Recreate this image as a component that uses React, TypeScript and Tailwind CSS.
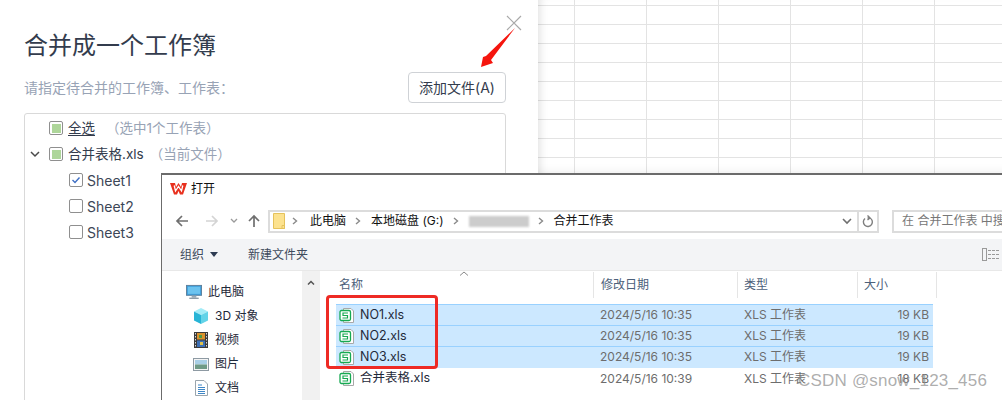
const cjk = "font-['Inter','Noto_Sans_CJK_SC',sans-serif]";

function Cross() {
  return (
    <svg width="16" height="16" viewBox="0 0 16 16" className="absolute left-[506px] top-[15px]">
      <path d="M1 1L15 15M15 1L1 15" stroke="#a9a9a9" strokeWidth="1.2" fill="none" />
    </svg>
  );
}

function RedArrow() {
  return (
    <svg width="46" height="46" viewBox="0 0 46 46" className="absolute left-[478px] top-[26px]">
      <path d="M37 2L13 34L15 37L3 41L5 31L8 30Z" fill="#f5150e" />
    </svg>
  );
}

function Mixed() {
  return (
    <span className="flex h-[14px] w-[14px] items-center justify-center rounded-[2px] border border-[#8f8f8f] bg-white">
      <span className="h-[9px] w-[9px] bg-[#aed69a]" />
    </span>
  );
}

function SheetRow({ name, checked }: { name: string; checked?: boolean }) {
  return (
    <div className="flex h-[26px] items-center gap-[4px] pl-[44px]">
      <span className="flex h-[14px] w-[14px] items-center justify-center rounded-[2px] border border-[#8f8f8f] bg-white">
        {checked && (
          <svg width="10" height="10" viewBox="0 0 10 10">
            <path d="M1.500 5L4 7.500L8.500 2.500" stroke="#3f6fc4" strokeWidth="1.400" fill="none" />
          </svg>
        )}
      </span>
      <span className="text-[14px] text-[#3c4656]">{name}</span>
    </div>
  );
}

function WpsLogo() {
  return (
    <svg width="17" height="12" viewBox="0 0 17 12">
      <path d="M0 0H5L6 4L8.500 0L11 4L12 0H17L13 11.500H10L8.500 8L7 11.500H4Z" fill="#e8301e" />
      <path d="M4.200 2.500L5.500 8L8.500 3.500L11.500 8L12.800 2.500" stroke="#fff" strokeWidth="1.300" fill="none" />
    </svg>
  );
}

function Chevron() {
  return (
    <svg width="6" height="8" viewBox="0 0 6 8">
      <path d="M1 1L4.500 4L1 7" stroke="#8a8a8a" strokeWidth="1.400" fill="none" />
    </svg>
  );
}

function ArrowIcon({ dir, color }: { dir: "left" | "right" | "up"; color: string }) {
  const d =
    dir === "left"
      ? "M13 7H2M7 2L2 7L7 12"
      : dir === "right"
        ? "M1 7H12M7 2L12 7L7 12"
        : "M7 13V2M2 7L7 2L12 7";
  return (
    <svg width="14" height="14" viewBox="0 0 14 14">
      <path d={d} stroke={color} strokeWidth="1.700" fill="none" />
    </svg>
  );
}

function XlsIcon() {
  return (
    <svg width="16" height="17" viewBox="0 0 16 17">
      <path d="M4.500 1.500H12L14.500 4V15.500H4.500Z" fill="#fff" stroke="#a8a8a8" />
      <rect x="1" y="3.500" width="10.500" height="10" rx="1.500" fill="#fff" stroke="#16a951" strokeWidth="1.300" />
      <path d="M9 6H4V8.500H8.500V11H3.500" stroke="#16a951" strokeWidth="1.200" fill="none" />
    </svg>
  );
}

function PcIcon() {
  return (
    <svg width="17" height="16" viewBox="0 0 17 16">
      <rect x="0.500" y="1" width="16" height="10.500" fill="#3f9fdc" stroke="#5b7f9c" />
      <rect x="2" y="2.500" width="13" height="7.500" fill="#6cc3ef" />
      <rect x="6" y="12" width="5" height="2" fill="#9aa9b5" />
      <rect x="3.500" y="14" width="10" height="1.300" fill="#7f8f9c" />
    </svg>
  );
}

function CubeIcon() {
  return (
    <svg width="16" height="16" viewBox="0 0 16 16">
      <path d="M8 0L15 3.500L8 7L1 3.500Z" fill="#a4ecf7" />
      <path d="M1 3.500L8 7V16L1 12.500Z" fill="#27b4d6" />
      <path d="M15 3.500L8 7V16L15 12.500Z" fill="#63d3e8" />
    </svg>
  );
}

function FilmIcon() {
  return (
    <svg width="14" height="16" viewBox="0 0 14 16">
      <rect x="0" y="0" width="14" height="16" fill="#3a3a3a" />
      <rect x="3" y="1" width="8" height="6.500" fill="#d9912c" />
      <rect x="3" y="8.500" width="8" height="6.500" fill="#3d6fb4" />
      <rect x="5" y="3" width="3" height="3" fill="#4d9a46" />
      <rect x="6" y="10" width="3" height="3" fill="#e0c24a" />
      <path d="M1.500 1V15M12.500 1V15" stroke="#d8d8d8" strokeWidth="1" strokeDasharray="1.500 1.500" />
    </svg>
  );
}

function PicIcon() {
  return (
    <svg width="16" height="13" viewBox="0 0 16 13">
      <rect x="0.500" y="0.500" width="15" height="12" fill="#f4f4f4" stroke="#8e9aa3" />
      <rect x="2" y="2" width="12" height="4.500" fill="#a9cfe6" />
      <rect x="2" y="6.500" width="12" height="4.500" fill="#6f9a86" />
    </svg>
  );
}

function DocIcon() {
  return (
    <svg width="13" height="16" viewBox="0 0 13 16">
      <path d="M0.500 0.500H9L12.500 4V15.500H0.500Z" fill="#fff" stroke="#9aa5ad" />
      <path d="M3 5H7M3 7.500H10M3 9.500H10M3 11.500H10M3 13.500H10" stroke="#3f87c7" strokeWidth="1" />
    </svg>
  );
}

function SideItem({ icon, label, indent }: { icon: React.ReactNode; label: string; indent: number }) {
  return (
    <div className="flex h-[24px] items-center text-[12px] text-[#1f2a3a]">
      <span style={{ marginLeft: indent }} className="flex w-[16px] justify-center">
        {icon}
      </span>
      <span className="ml-[6px]">{label}</span>
    </div>
  );
}

const files = [
  { name: "NO1.xls", date: "2024/5/16 10:35", size: "19 KB", sel: true },
  { name: "NO2.xls", date: "2024/5/16 10:35", size: "19 KB", sel: true },
  { name: "NO3.xls", date: "2024/5/16 10:35", size: "19 KB", sel: true },
  { name: "合并表格.xls", date: "2024/5/16 10:39", size: "18 KB", sel: false },
];

function FileRow({ f }: { f: (typeof files)[number] }) {
  return (
    <div
      className={`ml-[16px] grid w-[597px] grid-cols-[256px_144px_120px_1fr] items-center text-[12px] ${
        f.sel ? "border-t border-[#99d1ff] bg-[#cce8ff]" : ""
      } ${f.name === "NO3.xls" ? "h-[22px] pb-[1px]" : "h-[21px]"}`}
    >
      <div className="flex items-center gap-[5px] pl-[3px] text-[#1f2a3a]">
        <XlsIcon />
        <span className="text-[12.500px]">{f.name}</span>
      </div>
      <div className="pl-[8px] text-[#6d6d6d]">{f.date}</div>
      <div className="pl-[8px] text-[#6d6d6d]">XLS 工作表</div>
      <div className="pr-[4px] text-right text-[#6d6d6d]">{f.size}</div>
    </div>
  );
}

function OpenDialog() {
  return (
    <div className="absolute left-[161px] top-[173px] h-[240px] w-[860px] border-l border-t-2 border-[#6b6b6b] bg-white">
      <div className="flex h-[27px] items-center pl-[8px]">
        <WpsLogo />
        <span className="ml-[4px] text-[12px] text-[#111]">打开</span>
      </div>
      <div className="flex h-[37px] items-center pt-[1px]">
        <div className="ml-[13px] flex w-[93px] items-center">
          <ArrowIcon dir="left" color="#6f6f6f" />
          <span className="ml-[16px]">
            <ArrowIcon dir="right" color="#d4d4d4" />
          </span>
          <svg width="8" height="6" viewBox="0 0 8 6" className="ml-[11px]">
            <path d="M1 1L4 4L7 1" stroke="#9a9a9a" strokeWidth="1.300" fill="none" />
          </svg>
          <span className="ml-[9px]">
            <ArrowIcon dir="up" color="#6f6f6f" />
          </span>
        </div>
        <div className="flex h-[23px] w-[611px] items-center border-2 border-[#dcdcdc] text-[12px] text-[#111]">
          <svg width="12" height="16" viewBox="0 0 12 16" className="ml-[3px]">
            <path d="M0.500 0.500H11.500V15.500H0.500Z" fill="#fce28f" stroke="#e5c25c" />
            <path d="M9 12.500H11.500V15.500H9Z" fill="#fce28f" stroke="#e5c25c" />
          </svg>
          <span className="ml-[7px]"><Chevron /></span>
          <span className="ml-[12px]">此电脑</span>
          <span className="ml-[9px]"><Chevron /></span>
          <span className="ml-[10px]">本地磁盘 (G:)</span>
          <span className="ml-[9px]"><Chevron /></span>
          <span className="ml-[10px] h-[11px] w-[60px] bg-[#cccccc] blur-[1px]" />
          <span className="ml-[9px]"><Chevron /></span>
          <span className="ml-[10px]">合并工作表</span>
          <div className="ml-auto flex h-full items-center">
            <svg width="10" height="7" viewBox="0 0 10 7" className="mr-[5px]">
              <path d="M1 1L5 5L9 1" stroke="#6f6f6f" strokeWidth="1.600" fill="none" />
            </svg>
            <div className="flex h-full w-[20px] items-center justify-center border-l-2 border-[#dcdcdc]">
              <svg width="12" height="13" viewBox="0 0 12 13">
                <path d="M3 3.500A4.500 4.500 0 1 0 8 3L5.500 3M5.500 0.500L8 3L5.500 5" stroke="#7f7f7f" strokeWidth="1.400" fill="none" />
              </svg>
            </div>
          </div>
        </div>
        <div className="ml-[13px] flex h-[23px] flex-1 items-center overflow-hidden border-2 border-r-0 border-[#dcdcdc] pl-[8px] text-[12px] whitespace-nowrap text-[#777]">
          在 合并工作表 中搜索
        </div>
      </div>
      <div className="flex h-[32px] items-center border-b border-[#e8e8e8] bg-[#f3f4f6] pl-[18px] text-[12px] text-[#3d4a5c]">
        <span>组织</span>
        <svg width="8" height="5" viewBox="0 0 8 5" className="ml-[6px]">
          <path d="M0 0H8L4 5Z" fill="#2d3b52" />
        </svg>
        <span className="ml-[30px]">新建文件夹</span>
        <svg width="18" height="13" viewBox="0 0 18 13" className="ml-[674px]">
          <rect x="0.500" y="0.500" width="4" height="12" fill="none" stroke="#9a9a9a" />
          <path d="M6 2.500H18M6 6.500H18M6 10.500H18" stroke="#9a9a9a" strokeDasharray="3 1" />
        </svg>
      </div>
      <div className="flex">
        <div className="w-[140px] pt-[9px]">
          <SideItem icon={<PcIcon />} label="此电脑" indent={24} />
          <SideItem icon={<CubeIcon />} label="3D 对象" indent={31} />
          <SideItem icon={<FilmIcon />} label="视频" indent={31} />
          <SideItem icon={<PicIcon />} label="图片" indent={31} />
          <SideItem icon={<DocIcon />} label="文档" indent={31} />
        </div>
        <div className="flex h-[130px] w-[18px] justify-center bg-[#f1f1f1] pt-[9px]">
          <svg width="8" height="5" viewBox="0 0 8 5">
            <path d="M1 4.500L4 1.500L7 4.500" stroke="#555" strokeWidth="1.500" fill="none" />
          </svg>
        </div>
        <div className="flex-1">
          <div className="relative flex h-[27px] pt-[1px] text-[12px] text-[#4c607a]">
            <svg width="10" height="5" viewBox="0 0 10 5" className="absolute left-[139px] top-0">
              <path d="M1 4.500L5 1L9 4.500" stroke="#8a8a8a" fill="none" />
            </svg>
            <div className="flex w-[273px] items-center pl-[19px]">名称</div>
            <div className="flex w-[144px] items-center border-l border-[#e5e5e5] pl-[7px]">修改日期</div>
            <div className="flex w-[120px] items-center border-l border-[#e5e5e5] pl-[6px]">类型</div>
            <div className="flex w-[80px] items-center border-x border-[#e5e5e5] pl-[6px]">大小</div>
          </div>
          <div className="pt-[6px]">
            {files.map((f) => (
              <FileRow key={f.name} f={f} />
            ))}
          </div>
        </div>
      </div>
    </div>
  );
}

export default function App() {
  return (
    <div className={`relative flex h-[400px] w-[1002px] overflow-hidden bg-white ${cjk}`}>
      <div className="w-[538px] shrink-0 bg-white pt-[30px] pl-[24px]">
        <h1 className="text-[24px] leading-[32px] text-[#333c4d]">合并成一个工作簿</h1>
        <div className="mt-[10px] flex h-[31px] w-[482px] items-center justify-between">
          <span className="text-[14px] text-[#98a3b5]">请指定待合并的工作簿、工作表：</span>
          <button className="h-[31px] w-[98px] rounded-[4px] border border-[#cfd2d6] text-[14px] text-[#333c4d]">
            添加文件(A)
          </button>
        </div>
        <div className="mt-[10px] h-[300px] w-[482px] rounded-[3px] border border-[#d9d9d9] pt-[1px] text-[13.500px]">
          <div className="flex h-[26px] items-center gap-[5px] pl-[24px]">
            <Mixed />
            <span className="text-[#333c4d] underline underline-offset-2">全选</span>
            <span className="ml-[6px] text-[#98a3b5]">（选中1个工作表）</span>
          </div>
          <div className="flex h-[26px] items-center pl-[5px]">
            <svg width="10" height="7" viewBox="0 0 10 7" className="mr-[9px]">
              <path d="M1 1L5 5L9 1" stroke="#4a4a4a" strokeWidth="1.500" fill="none" />
            </svg>
            <Mixed />
            <span className="ml-[5px] text-[#333c4d]">合并表格.xls</span>
            <span className="ml-[6px] text-[#98a3b5]">（当前文件）</span>
          </div>
          <SheetRow name="Sheet1" checked />
          <SheetRow name="Sheet2" />
          <SheetRow name="Sheet3" />
        </div>
      </div>
      <div className="h-[173px] flex-1 bg-[linear-gradient(to_right,#e3e3e3_1px,transparent_1px),linear-gradient(to_bottom,#e3e3e3_1px,transparent_1px)] bg-[size:72px_19px] bg-[position:36px_5px] shadow-[inset_8px_0_8px_-6px_rgba(0,0,0,0.12),inset_0_-12px_10px_-10px_rgba(0,0,0,0.06)]" />
      <Cross />
      <RedArrow />
      <OpenDialog />
      <div className="absolute left-[326px] top-[295px] h-[74px] w-[112px] rounded-[4px] border-[3px] border-[#ee2a24]" />
      <div className="absolute left-[798px] top-[370px] font-['Liberation_Sans',sans-serif] text-[17px] leading-[22px] tracking-[0.2px] text-[#8a8a8a]/70">
        CSDN @snow_123_456
      </div>
    </div>
  );
}
